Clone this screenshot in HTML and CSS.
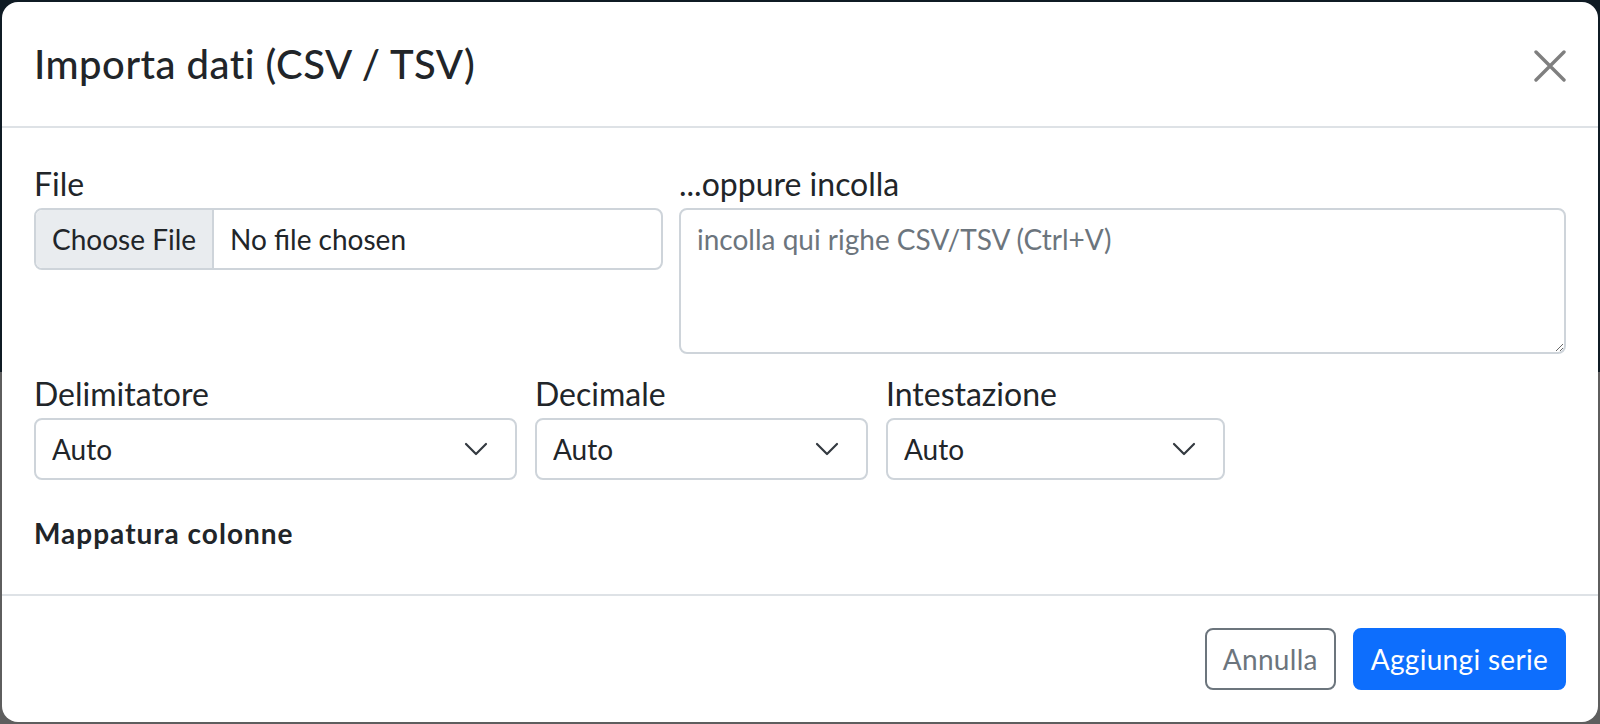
FILE: index.html
```html
<!DOCTYPE html>
<html lang="it">
<head>
<meta charset="utf-8">
<title>Importa dati</title>
<link rel="stylesheet" href="styles.css">
</head>
<body>
<div class="modal">
  <div class="modal-header">
    <h5 class="modal-title">Importa dati (CSV / TSV)</h5>
    <button class="btn-close" type="button" aria-label="Chiudi">
      <svg width="32" height="32" viewBox="0 0 32 32"><path d="M2 2 L30 30 M30 2 L2 30" stroke="#7f7f7f" stroke-width="3.4" stroke-linecap="round" fill="none"/></svg>
    </button>
  </div>
  <div class="modal-body">
    <div class="row row-top">
      <div class="field field-file">
        <label class="form-label">File</label>
        <input type="file" class="form-control">
      </div>
      <div class="field field-paste">
        <label class="form-label">...oppure incolla</label>
        <textarea class="form-textarea" placeholder="incolla qui righe CSV/TSV (Ctrl+V)"></textarea>
      </div>
    </div>
    <div class="row row-opts">
      <div class="field w-delim">
        <label class="form-label">Delimitatore</label>
        <div class="select-wrap">
          <select class="form-select"><option>Auto</option></select>
          <svg class="chev" width="24" height="14" viewBox="0 0 24 14"><path d="M2 2l10 10 10-10" fill="none" stroke="#343a40" stroke-width="2.2" stroke-linecap="round" stroke-linejoin="round"/></svg>
        </div>
      </div>
      <div class="field w-dec">
        <label class="form-label">Decimale</label>
        <div class="select-wrap">
          <select class="form-select"><option>Auto</option></select>
          <svg class="chev" width="24" height="14" viewBox="0 0 24 14"><path d="M2 2l10 10 10-10" fill="none" stroke="#343a40" stroke-width="2.2" stroke-linecap="round" stroke-linejoin="round"/></svg>
        </div>
      </div>
      <div class="field w-head">
        <label class="form-label">Intestazione</label>
        <div class="select-wrap">
          <select class="form-select"><option>Auto</option></select>
          <svg class="chev" width="24" height="14" viewBox="0 0 24 14"><path d="M2 2l10 10 10-10" fill="none" stroke="#343a40" stroke-width="2.2" stroke-linecap="round" stroke-linejoin="round"/></svg>
        </div>
      </div>
    </div>
    <div class="section-title">Mappatura colonne</div>
  </div>
  <div class="modal-footer">
    <button class="btn btn-outline" type="button">Annulla</button>
    <button class="btn btn-primary" type="button">Aggiungi serie</button>
  </div>
</div>
</body>
</html>
```
FILE: styles.css
```css
html, body {
  margin: 0;
  padding: 0;
}
body {
  width: 1600px;
  height: 724px;
  overflow: hidden;
  background: linear-gradient(to bottom, #0f1b24 0, #0f1b24 372px, #5e5e5e 372px, #5e5e5e 100%);
  font-family: Lato, "Open Sans", "Liberation Sans", sans-serif;
  color: #212529;
}
.modal {
  margin: 2px 0 0 2px;
  width: 1596px;
  background: #fff;
  border-radius: 16px;
  overflow: hidden;
}
.modal-header {
  display: flex;
  align-items: center;
  justify-content: space-between;
  padding: 32px;
  border-bottom: 2px solid #dee2e6;
}
.modal-title {
  margin: 0;
  font-size: 40px;
  line-height: 60px;
  font-weight: 500;
  letter-spacing: 0.5px;
}
.btn-close {
  border: 0;
  background: transparent;
  padding: 0;
  width: 32px;
  height: 32px;
  display: block;
  margin-top: 3px;
}
.btn-close svg { display: block; }
.modal-body {
  padding: 32px;
}
.row {
  display: flex;
  gap: 16px;
  align-items: flex-start;
}
.row-opts {
  margin-top: 16px;
  gap: 18px;
}
.field {
  display: flex;
  flex-direction: column;
}
.field-file { width: 629px; }
.field-paste { flex: 1; }
.w-delim { width: 483px; }
.w-dec { width: 333px; }
.w-head { width: 339px; }
.form-label {
  font-size: 32px;
  line-height: 48px;
}
.form-control {
  box-sizing: border-box;
  width: 100%;
  height: 62px;
  margin: 0;
  padding: 8px 16px;
  font-family: inherit;
  font-size: 28px;
  line-height: 42px;
  color: #212529;
  background: #fff;
  border: 2px solid #ced4da;
  border-radius: 8px;
  overflow: hidden;
}
.form-control::file-selector-button {
  font-family: inherit;
  font-size: 28px;
  color: #212529;
  background: #e9ecef;
  border: 0;
  border-right: 2px solid #ced4da;
  border-radius: 0;
  padding: 8px 16px;
  margin: -8px 16px -8px -16px;
  height: 58px;
  line-height: 42px;
}
.form-textarea {
  box-sizing: border-box;
  width: 100%;
  height: 146px;
  margin: 0;
  padding: 8px 16px;
  font-family: inherit;
  font-size: 28px;
  line-height: 42px;
  color: #212529;
  border: 2px solid #ced4da;
  border-radius: 8px;
  resize: vertical;
  display: block;
}
.form-textarea::placeholder {
  color: #6c757d;
  opacity: 1;
}
.select-wrap {
  position: relative;
}
.form-select {
  box-sizing: border-box;
  width: 100%;
  height: 62px;
  margin: 0;
  padding: 8px 64px 8px 16px;
  font-family: inherit;
  font-size: 28px;
  line-height: 42px;
  color: #212529;
  background: #fff;
  border: 2px solid #ced4da;
  border-radius: 8px;
  appearance: none;
  -webkit-appearance: none;
  display: block;
}
.chev {
  position: absolute;
  right: 29px;
  top: 24px;
  pointer-events: none;
}
.section-title {
  margin-top: 32px;
  margin-bottom: 8px;
  font-size: 28px;
  line-height: 42px;
  font-weight: 700;
  letter-spacing: 1px;
}
.modal-footer {
  display: flex;
  justify-content: flex-end;
  align-items: center;
  gap: 17px;
  padding: 32px;
  border-top: 2px solid #dee2e6;
}
.btn {
  box-sizing: border-box;
  height: 62px;
  padding: 8px 16px;
  font-family: inherit;
  font-size: 28px;
  line-height: 42px;
  letter-spacing: 0.3px;
  border: 2px solid transparent;
  border-radius: 8px;
  cursor: pointer;
}
.btn-outline {
  color: #6c757d;
  background: #fff;
  border-color: #6c757d;
}
.btn-primary {
  color: #fff;
  background: #0d6efd;
  border-color: #0d6efd;
}
```
